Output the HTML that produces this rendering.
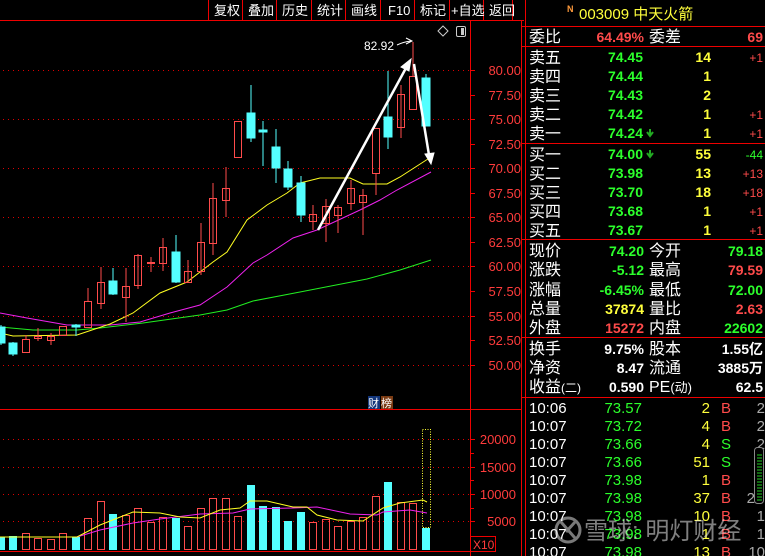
<!DOCTYPE html>
<html><head><meta charset="utf-8"><style>
html,body{margin:0;padding:0;background:#000;width:765px;height:556px;overflow:hidden}
svg{display:block}
text{font-family:"Liberation Sans","Noto Sans CJK SC",sans-serif}
.w{fill:#fff}.r{fill:#ff4b4b}.g{fill:#2cff2c}.y{fill:#ffff3c}
.cn{font-size:16px}
.n{font-size:14px;font-weight:bold}
.ax{font-size:13px;fill:#ff3c3c}
</style></head><body>
<svg width="765" height="556" viewBox="0 0 765 556" xmlns="http://www.w3.org/2000/svg">
<g stroke="#e00" stroke-width="1">
<line x1="0" y1="20.5" x2="524" y2="20.5"/>
<line x1="208.5" y1="0" x2="208.5" y2="20"/><line x1="242.5" y1="0" x2="242.5" y2="20"/>
<line x1="276.5" y1="0" x2="276.5" y2="20"/><line x1="311.5" y1="0" x2="311.5" y2="20"/>
<line x1="345.5" y1="0" x2="345.5" y2="20"/><line x1="380.5" y1="0" x2="380.5" y2="20"/>
<line x1="414.5" y1="0" x2="414.5" y2="20"/><line x1="449.5" y1="0" x2="449.5" y2="20"/>
<line x1="483.5" y1="0" x2="483.5" y2="20"/><line x1="512.5" y1="0" x2="512.5" y2="20"/>
</g>
<g class="w" font-size="13">
<text x="214" y="15">复权</text><text x="248" y="15">叠加</text><text x="282" y="15">历史</text>
<text x="317" y="15">统计</text><text x="351" y="15">画线</text><text x="388" y="15">F10</text>
<text x="420" y="15">标记</text><text x="451" y="15">+自选</text><text x="489" y="15">返回</text>
</g>
<g stroke="#e00">
<line x1="470.5" y1="20" x2="470.5" y2="556"/>
<line x1="521.5" y1="20" x2="521.5" y2="556"/>
<line x1="0" y1="409.5" x2="521" y2="409.5"/>
<line x1="0" y1="551.5" x2="470" y2="551.5"/>
<rect x="470.5" y="536.5" width="25" height="15" fill="none"/>
</g>
<text x="473" y="549" font-size="12" fill="#ff3c3c">X10</text>
<path d="M443 26 L448 31 L443 36 L438 31 Z" fill="none" stroke="#ccc"/>
<rect x="456.5" y="26.5" width="9" height="10" rx="1.5" fill="none" stroke="#ccc"/>
<rect x="461" y="28" width="3" height="7" fill="#ccc"/>
<g stroke="#d00" stroke-dasharray="1 4" stroke-width="1">
<line x1="3" y1="70.5" x2="470" y2="70.5"/><line x1="3" y1="119.5" x2="470" y2="119.5"/>
<line x1="3" y1="168.5" x2="470" y2="168.5"/><line x1="3" y1="217.5" x2="470" y2="217.5"/>
<line x1="3" y1="266.5" x2="470" y2="266.5"/><line x1="3" y1="316.5" x2="470" y2="316.5"/>
<line x1="3" y1="365.5" x2="470" y2="365.5"/>
<line x1="3" y1="439.5" x2="470" y2="439.5"/><line x1="3" y1="467.5" x2="470" y2="467.5"/>
<line x1="3" y1="494.5" x2="470" y2="494.5"/><line x1="3" y1="521.5" x2="470" y2="521.5"/>
</g>
<g stroke="#e00">
<line x1="470" y1="95.5" x2="475" y2="95.5"/><line x1="470" y1="144.5" x2="475" y2="144.5"/>
<line x1="470" y1="193.5" x2="475" y2="193.5"/><line x1="470" y1="242.5" x2="475" y2="242.5"/>
<line x1="470" y1="291.5" x2="475" y2="291.5"/><line x1="470" y1="340.5" x2="475" y2="340.5"/>
<line x1="470" y1="70.5" x2="475" y2="70.5"/><line x1="470" y1="119.5" x2="475" y2="119.5"/>
<line x1="470" y1="168.5" x2="475" y2="168.5"/><line x1="470" y1="217.5" x2="475" y2="217.5"/>
<line x1="470" y1="266.5" x2="475" y2="266.5"/><line x1="470" y1="316.5" x2="475" y2="316.5"/>
<line x1="470" y1="365.5" x2="475" y2="365.5"/>
<line x1="470" y1="439.5" x2="475" y2="439.5"/><line x1="470" y1="467.5" x2="475" y2="467.5"/>
<line x1="470" y1="494.5" x2="475" y2="494.5"/><line x1="470" y1="521.5" x2="475" y2="521.5"/>
<line x1="470" y1="453.5" x2="474" y2="453.5"/><line x1="470" y1="480.5" x2="474" y2="480.5"/><line x1="470" y1="508.5" x2="474" y2="508.5"/>
</g>
<g class="ax" text-anchor="end">
<text x="521" y="75">80.00</text><text x="521" y="100">77.50</text><text x="521" y="124">75.00</text>
<text x="521" y="149">72.50</text><text x="521" y="173">70.00</text><text x="521" y="198">67.50</text>
<text x="521" y="222">65.00</text><text x="521" y="247">62.50</text><text x="521" y="271">60.00</text>
<text x="521" y="296">57.50</text><text x="521" y="321">55.00</text><text x="521" y="345">52.50</text>
<text x="521" y="370">50.00</text>
<text x="516" y="444">20000</text><text x="516" y="472">15000</text><text x="516" y="499">10000</text><text x="516" y="526">5000</text>
</g>
<g fill="none" stroke-width="1">
<polyline stroke="#22ee22" points="0,327 33,330 77,330 100,328 143,323 200,315 227,310 253,301 300,292 367,279 400,270 431,260"/>
<polyline stroke="#ee22ee" points="0,313 27,318 67,325 110,325 140,322 170,313 200,305 227,287 253,263 267,255 293,238 317,230 360,210 380,200 397,190 431,172"/>
<polyline stroke="#ffff22" points="0,333 13,336 77,335 110,324 133,313 160,293 187,282 213,262 227,252 247,220 267,205 287,193 300,183 320,178 350,178 363,184 387,184 400,177 431,157"/>
</g>
<g stroke="#ff4b4b" fill="none">
<line x1="26" y1="335" x2="26" y2="339"/><rect x="22.5" y="339.5" width="7" height="13"/>
<line x1="38" y1="328" x2="38" y2="341"/><rect x="34.5" y="336.5" width="7" height="2"/>
<line x1="51" y1="333" x2="51" y2="345"/><rect x="47.5" y="336.5" width="7" height="4"/>
<rect x="59.5" y="326.5" width="7" height="9"/>
<line x1="88" y1="288" x2="88" y2="301"/><rect x="84.5" y="301.5" width="7" height="26"/>
<line x1="101" y1="267" x2="101" y2="309"/><rect x="97.5" y="282.5" width="7" height="21"/>
<line x1="126" y1="268" x2="126" y2="322"/><rect x="122.5" y="286.5" width="7" height="11"/>
<line x1="138" y1="254" x2="138" y2="289"/><rect x="134.5" y="255.5" width="7" height="30"/>
<line x1="151" y1="257" x2="151" y2="272"/><rect x="147.5" y="262.5" width="7" height="1"/>
<line x1="163" y1="238" x2="163" y2="271"/><rect x="159.5" y="247.5" width="7" height="16"/>
<line x1="188" y1="260" x2="188" y2="283"/><rect x="184.5" y="271.5" width="7" height="11"/>
<line x1="201" y1="223" x2="201" y2="275"/><rect x="197.5" y="242.5" width="7" height="29"/>
<line x1="213" y1="183" x2="213" y2="255"/><rect x="209.5" y="198.5" width="7" height="45"/>
<line x1="226" y1="167" x2="226" y2="217"/><rect x="222.5" y="188.5" width="7" height="12"/>
<rect x="234.5" y="121.5" width="7" height="36"/>
<line x1="313" y1="205" x2="313" y2="230"/><rect x="309.5" y="214.5" width="7" height="7"/>
<line x1="326" y1="199" x2="326" y2="242"/><rect x="322.5" y="206.5" width="7" height="17"/>
<line x1="338" y1="205" x2="338" y2="233"/><rect x="334.5" y="207.5" width="7" height="8"/>
<line x1="351" y1="180" x2="351" y2="210"/><rect x="347.5" y="188.5" width="7" height="15"/>
<line x1="363" y1="189" x2="363" y2="235"/><rect x="359.5" y="195.5" width="7" height="7"/>
<line x1="376" y1="174" x2="376" y2="195"/><rect x="372.5" y="128.5" width="7" height="45"/>
<line x1="401" y1="85" x2="401" y2="138"/><rect x="397.5" y="94.5" width="7" height="33"/>
<line x1="413" y1="42" x2="413" y2="76"/><rect x="409.5" y="76.5" width="7" height="33"/>
</g>
<g stroke="#54ffff" fill="#54ffff">
<line x1="1" y1="325" x2="1" y2="345"/><rect x="-3" y="327" width="8" height="16"/>
<line x1="13" y1="342" x2="13" y2="356"/><rect x="9" y="343" width="8" height="11"/>
<line x1="76" y1="324" x2="76" y2="336"/><rect x="72" y="325" width="8" height="2"/>
<line x1="113" y1="268" x2="113" y2="295"/><rect x="109" y="281" width="8" height="13"/>
<line x1="176" y1="235" x2="176" y2="283"/><rect x="172" y="252" width="8" height="30"/>
<line x1="251" y1="85" x2="251" y2="142"/><rect x="247" y="113" width="8" height="25"/>
<line x1="263" y1="121" x2="263" y2="166"/><rect x="259" y="130" width="8" height="2"/>
<line x1="276" y1="129" x2="276" y2="183"/><rect x="272" y="147" width="8" height="21"/>
<line x1="288" y1="161" x2="288" y2="190"/><rect x="284" y="169" width="8" height="18"/>
<line x1="301" y1="176" x2="301" y2="222"/><rect x="297" y="183" width="8" height="32"/>
<line x1="388" y1="71" x2="388" y2="149"/><rect x="384" y="117" width="8" height="20"/>
<line x1="426" y1="74" x2="426" y2="126"/><rect x="422" y="78" width="8" height="48"/>
</g>
<g stroke="#fff" fill="#fff">
<line x1="318" y1="230" x2="406" y2="68" stroke-width="2.5"/>
<path d="M411 59 L401 67 L409 71 Z"/>
<line x1="414" y1="64" x2="429" y2="155" stroke-width="2.5"/>
<path d="M431 164 L425 154 L434 153 Z"/>
<path d="M397 45 Q403 42 411 41" fill="none" stroke-width="1"/>
<path d="M406 38 L412 41 L406 44" fill="none" stroke-width="1"/>
</g>
<text x="364" y="50" font-size="12" fill="#fff">82.92</text>
<rect x="368" y="396" width="12" height="13" fill="#12357a"/><rect x="381" y="396" width="12" height="13" fill="#7a3a12"/>
<text x="368" y="407" font-size="11" fill="#fff">财</text><text x="381" y="407" font-size="11" fill="#fff">榜</text>
<g stroke="#ff4b4b" fill="none">
<rect x="22.5" y="533.5" width="7" height="16"/><rect x="34.5" y="538.5" width="7" height="11"/>
<rect x="47.5" y="539.5" width="7" height="10"/><rect x="59.5" y="533.5" width="7" height="16"/>
<rect x="84.5" y="518.5" width="7" height="31"/><rect x="97.5" y="501.5" width="7" height="48"/>
<rect x="122.5" y="515.5" width="7" height="34"/><rect x="134.5" y="508.5" width="7" height="41"/>
<rect x="147.5" y="522.5" width="7" height="27"/><rect x="159.5" y="517.5" width="7" height="32"/>
<rect x="184.5" y="526.5" width="7" height="23"/><rect x="197.5" y="508.5" width="7" height="41"/>
<rect x="209.5" y="498.5" width="7" height="51"/><rect x="222.5" y="498.5" width="7" height="51"/>
<rect x="234.5" y="516.5" width="7" height="33"/>
<rect x="309.5" y="522.5" width="7" height="27"/><rect x="322.5" y="519.5" width="7" height="30"/>
<rect x="334.5" y="526.5" width="7" height="23"/><rect x="347.5" y="521.5" width="7" height="28"/>
<rect x="359.5" y="517.5" width="7" height="32"/><rect x="372.5" y="496.5" width="7" height="53"/>
<rect x="397.5" y="502.5" width="7" height="47"/><rect x="409.5" y="503.5" width="7" height="46"/>
</g>
<g fill="#54ffff">
<rect x="0" y="537" width="5" height="13"/><rect x="9" y="536" width="8" height="14"/>
<rect x="72" y="537" width="8" height="13"/><rect x="109" y="514" width="8" height="36"/>
<rect x="172" y="518" width="8" height="32"/><rect x="247" y="485" width="8" height="65"/>
<rect x="259" y="506" width="8" height="44"/><rect x="272" y="507" width="8" height="43"/>
<rect x="284" y="521" width="8" height="29"/><rect x="297" y="512" width="8" height="38"/>
<rect x="384" y="482" width="8" height="68"/><rect x="422" y="528" width="8" height="22"/>
</g>
<rect x="422.5" y="429.5" width="8" height="98" fill="none" stroke="#ffff33" stroke-dasharray="1 1.5"/>
<g fill="none">
<polyline stroke="#ee22ee" points="0,537 77,537 100,530 133,523 160,519 200,514 233,513 250,509 293,508 317,507 350,514 377,515 383,512 410,510 427,513"/>
<polyline stroke="#ffff22" points="0,537 77,537 100,525 133,512 160,513 180,517 200,518 220,510 240,508 250,501 267,501 293,507 307,507 317,515 337,520 363,521 383,508 400,503 423,500 427,502"/>
</g>

<g stroke="#e00">
<line x1="522" y1="26.5" x2="765" y2="26.5"/>
<line x1="522" y1="46.5" x2="765" y2="46.5"/>
<line x1="522" y1="143.5" x2="765" y2="143.5"/>
<line x1="522" y1="239.5" x2="765" y2="239.5"/>
<line x1="522" y1="337.5" x2="765" y2="337.5"/>
<line x1="522" y1="397.5" x2="765" y2="397.5"/>
<line x1="525.5" y1="0" x2="525.5" y2="556"/>
</g>
<text x="567" y="12" font-size="9" font-weight="bold" fill="#ff9a3c">N</text>
<text x="579" y="19" font-size="15" class="y">003009 中天火箭</text>
<g class="w cn">
<text x="529" y="42">委比</text><text x="649" y="42">委差</text>
<text x="529" y="63">卖五</text><text x="529" y="82">卖四</text><text x="529" y="101">卖三</text><text x="529" y="120">卖二</text><text x="529" y="139">卖一</text>
<text x="529" y="160">买一</text><text x="529" y="179">买二</text><text x="529" y="198">买三</text><text x="529" y="217">买四</text><text x="529" y="236">买五</text>
<text x="529" y="256">现价</text><text x="649" y="256">今开</text>
<text x="529" y="275">涨跌</text><text x="649" y="275">最高</text>
<text x="529" y="295">涨幅</text><text x="649" y="295">最低</text>
<text x="529" y="314">总量</text><text x="649" y="314">量比</text>
<text x="529" y="333">外盘</text><text x="649" y="333">内盘</text>
<text x="529" y="354">换手</text><text x="649" y="354">股本</text>
<text x="529" y="373">净资</text><text x="649" y="373">流通</text>
<text x="529" y="392">收益<tspan font-size="12">(二)</tspan></text><text x="649" y="392">PE<tspan font-size="13">(动)</tspan></text>
</g>
<g class="n" text-anchor="end">
<text x="644" y="42" class="r">64.49%</text><text x="763" y="42" class="r">69</text>
<text x="643" y="62" class="g">74.45</text><text x="643" y="81" class="g">74.44</text><text x="643" y="100" class="g">74.43</text><text x="643" y="119" class="g">74.42</text><text x="643" y="138" class="g">74.24</text>
<text x="643" y="159" class="g">74.00</text><text x="643" y="178" class="g">73.98</text><text x="643" y="197" class="g">73.70</text><text x="643" y="216" class="g">73.68</text><text x="643" y="235" class="g">73.67</text>
<text x="711" y="62" class="y">14</text><text x="711" y="81" class="y">1</text><text x="711" y="100" class="y">2</text><text x="711" y="119" class="y">1</text><text x="711" y="138" class="y">1</text>
<text x="711" y="159" class="y">55</text><text x="711" y="178" class="y">13</text><text x="711" y="197" class="y">18</text><text x="711" y="216" class="y">1</text><text x="711" y="235" class="y">1</text>
</g>
<g font-size="12" text-anchor="end">
<text x="763" y="62" class="r">+1</text><text x="763" y="119" class="r">+1</text><text x="763" y="138" class="r">+1</text>
<text x="763" y="159" class="g">-44</text><text x="763" y="178" class="r">+13</text><text x="763" y="197" class="r">+18</text><text x="763" y="216" class="r">+1</text><text x="763" y="235" class="r">+1</text>
</g>
<path d="M650 129 v6 M647 132 l3 4 l3 -4" stroke="#22aa22" stroke-width="2" fill="none"/>
<path d="M650 150 v6 M647 153 l3 4 l3 -4" stroke="#22aa22" stroke-width="2" fill="none"/>
<g class="n" text-anchor="end">
<text x="644" y="256" class="g">74.20</text><text x="763" y="256" class="g">79.18</text>
<text x="644" y="275" class="g">-5.12</text><text x="763" y="275" class="r">79.59</text>
<text x="644" y="295" class="g">-6.45%</text><text x="763" y="295" class="g">72.00</text>
<text x="644" y="314" class="y">37874</text><text x="763" y="314" class="r">2.63</text>
<text x="644" y="333" class="r">15272</text><text x="763" y="333" class="g">22602</text>
<text x="644" y="354" class="w">9.75%</text><text x="763" y="354" class="w">1.55亿</text>
<text x="644" y="373" class="w">8.47</text><text x="763" y="373" class="w">3885万</text>
<text x="644" y="392" class="w">0.590</text><text x="763" y="392" class="w">62.5</text>
</g>
<g font-size="15">
<g class="w"><text x="529" y="413">10:06</text><text x="529" y="431">10:07</text><text x="529" y="449">10:07</text><text x="529" y="467">10:07</text><text x="529" y="485">10:07</text><text x="529" y="503">10:07</text><text x="529" y="521">10:07</text><text x="529" y="539">10:07</text><text x="529" y="557">10:07</text></g>
<g class="g" text-anchor="end"><text x="642" y="413">73.57</text><text x="642" y="431">73.72</text><text x="642" y="449">73.66</text><text x="642" y="467">73.66</text><text x="642" y="485">73.98</text><text x="642" y="503">73.98</text><text x="642" y="521">73.98</text><text x="642" y="539">73.98</text><text x="642" y="557">73.98</text></g>
<g class="y" text-anchor="end"><text x="710" y="413">2</text><text x="710" y="431">4</text><text x="710" y="449">4</text><text x="710" y="467">51</text><text x="710" y="485">1</text><text x="710" y="503">37</text><text x="710" y="521">10</text><text x="710" y="539">1</text><text x="710" y="557">13</text></g>
<g><text x="721" y="413" class="r">B</text><text x="721" y="431" class="r">B</text><text x="721" y="449" class="g">S</text><text x="721" y="467" class="g">S</text><text x="721" y="485" class="r">B</text><text x="721" y="503" class="r">B</text><text x="721" y="521" class="r">B</text><text x="721" y="539" class="r">B</text><text x="721" y="557" class="r">B</text></g>
<g fill="#aaa" text-anchor="end"><text x="765" y="413">2</text><text x="765" y="431">2</text><text x="765" y="449">2</text><text x="755" y="503">2</text><text x="765" y="521">1</text><text x="765" y="539">1</text><text x="765" y="557">10</text></g>
</g>
<rect x="754.5" y="447.5" width="9" height="56" rx="3" fill="#000" stroke="#888"/>
<g stroke="#22cc22"><line x1="757" y1="455" x2="762" y2="455"/><line x1="757" y1="458" x2="762" y2="458"/><line x1="757" y1="461" x2="762" y2="461"/><line x1="757" y1="464" x2="762" y2="464"/><line x1="757" y1="467" x2="762" y2="467"/><line x1="757" y1="470" x2="762" y2="470"/><line x1="757" y1="473" x2="762" y2="473"/><line x1="757" y1="476" x2="762" y2="476"/><line x1="757" y1="479" x2="762" y2="479"/><line x1="757" y1="482" x2="762" y2="482"/><line x1="757" y1="485" x2="762" y2="485"/><line x1="757" y1="488" x2="762" y2="488"/><line x1="757" y1="491" x2="762" y2="491"/><line x1="757" y1="494" x2="762" y2="494"/><line x1="757" y1="497" x2="762" y2="497"/><line x1="757" y1="500" x2="762" y2="500"/></g>
<g opacity="0.55">
<circle cx="568" cy="530" r="12" fill="none" stroke="#ddd" stroke-width="3"/>
<path d="M561 522 L575 538 M575 522 L566 532" stroke="#ddd" stroke-width="3" fill="none"/>
<text x="584" y="539" font-size="24" fill="#e8e8e8">雪球: 明灯财经</text>
</g>
</svg>
</body></html>
